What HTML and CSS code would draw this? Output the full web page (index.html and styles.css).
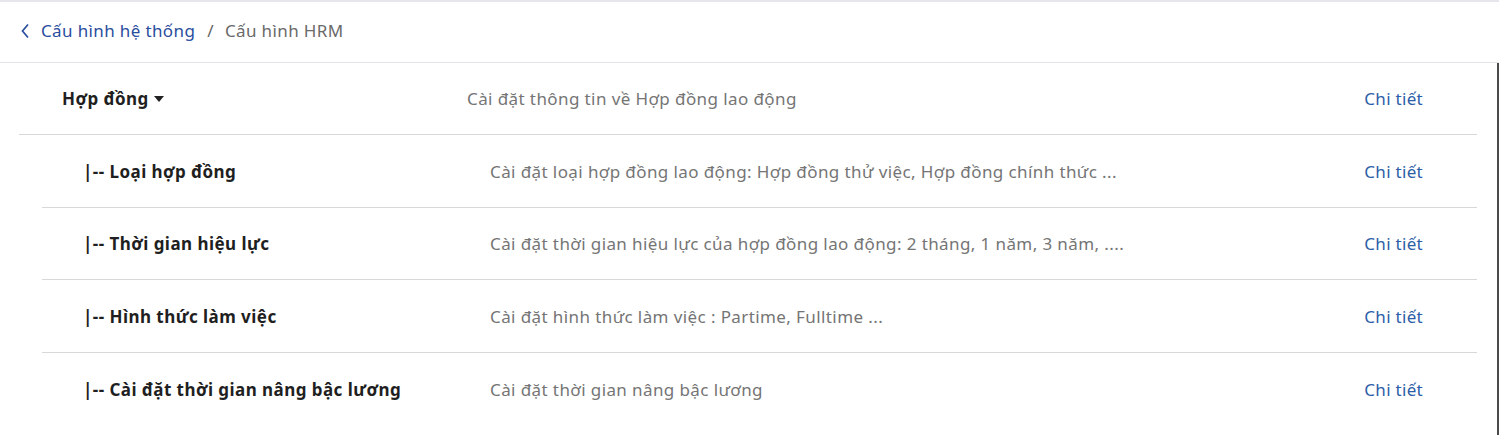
FILE: index.html
```html
<!DOCTYPE html>
<html lang="vi">
<head>
<meta charset="utf-8">
<link rel="stylesheet" href="styles.css">
</head>
<body>
<div class="page">
  <header class="crumbs">
    <a class="back" href="#">
      <svg width="10" height="16" viewBox="0 0 10 16"><path d="M8 1.5 L2.5 8 L8 14.5" fill="none" stroke="#2a4e9e" stroke-width="1.7"/></svg>
      <span>Cấu hình hệ thống</span>
    </a>
    <span class="sep">/</span>
    <span class="current">Cấu hình HRM</span>
  </header>
  <main class="content">
    <div class="row first">
      <div class="title">Hợp đồng <span class="caret"></span></div>
      <div class="desc">Cài đặt thông tin về Hợp đồng lao động</div>
      <a class="detail" href="#">Chi tiết</a>
    </div>
    <div class="row sub">
      <div class="title">|-- Loại hợp đồng</div>
      <div class="desc">Cài đặt loại hợp đồng lao động: Hợp đồng thử việc, Hợp đồng chính thức ...</div>
      <a class="detail" href="#">Chi tiết</a>
    </div>
    <div class="row sub short">
      <div class="title">|-- Thời gian hiệu lực</div>
      <div class="desc">Cài đặt thời gian hiệu lực của hợp đồng lao động: 2 tháng, 1 năm, 3 năm, ....</div>
      <a class="detail" href="#">Chi tiết</a>
    </div>
    <div class="row sub">
      <div class="title">|-- Hình thức làm việc</div>
      <div class="desc">Cài đặt hình thức làm việc : Partime, Fulltime ...</div>
      <a class="detail" href="#">Chi tiết</a>
    </div>
    <div class="row sub last">
      <div class="title">|-- Cài đặt thời gian nâng bậc lương</div>
      <div class="desc">Cài đặt thời gian nâng bậc lương</div>
      <a class="detail" href="#">Chi tiết</a>
    </div>
  </main>
</div>
</body>
</html>
```
FILE: styles.css
```css
* { box-sizing: border-box; }
html, body { margin: 0; padding: 0; background: #fff; }
body {
  font-family: "Noto Sans", "Open Sans", sans-serif;
  font-size: 17px;
  color: #222;
}
.page {
  width: 1499px;
  height: 435px;
  border-top: 2px solid #e6e6ec;
  overflow: hidden;
}
.crumbs {
  height: 61px;
  display: flex;
  align-items: center;
  padding-left: 20px;
  padding-bottom: 3px;
  border-bottom: 1px solid #e2e2e8;
  font-size: 17px;
  letter-spacing: 0.37px;
}
.back {
  display: flex;
  align-items: center;
  gap: 11px;
  color: #2a4e9e;
  text-decoration: none;
}
.sep { color: #666; margin: 0 11px 0 12px; }
.current { color: #6a6a6a; }
.content {
  border-right: 2px solid #4a4a4a;
  padding-left: 19px;
  padding-right: 20px;
  height: 372px;
}
.row {
  display: grid;
  grid-template-columns: 405px 1fr auto;
  align-items: center;
  height: 72px;
  padding-left: 43px;
  padding-right: 54px;
  border-bottom: 1px solid #d8d8d8;
}
.row.sub { margin-left: 23px; height: 73px; }
.row.sub .title { margin-left: -2px; }
.row.sub.short { height: 72px; }
.row.last { border-bottom: none; }
.title {
  font-weight: 700;
  font-size: 17px;
  letter-spacing: 0.45px;
  color: #1f1f22;
  display: flex;
  align-items: center;
}
.caret {
  display: inline-block;
  width: 0; height: 0;
  margin-left: 5px;
  border-left: 5px solid transparent;
  border-right: 5px solid transparent;
  border-top: 6px solid #222;
}
.desc { color: #757575; font-size: 17px; letter-spacing: 0.4px; }
.detail { color: #2c5ea8; text-decoration: none; font-size: 17px; letter-spacing: 0.3px; }
```
